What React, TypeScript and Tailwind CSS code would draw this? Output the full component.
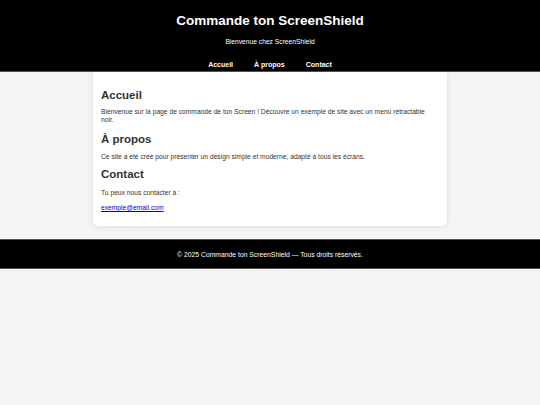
export default function App() {
  return (
    <div className="min-h-[405px] bg-[#f4f4f4] text-[#333] font-['Liberation_Sans',Arial,sans-serif]">
      <header className="bg-black text-white text-center pt-[12px] h-[72px] border-b border-[#555]">
        <h1 className="text-[13.5px] leading-[18px] font-bold">Commande ton ScreenShield</h1>
        <p className="text-[6.7px] leading-[9px] mt-[7px]">Bienvenue chez ScreenShield</p>
        <nav className="flex justify-center gap-[21px] mt-[14px] text-[7px] leading-[9px] font-bold">
          <a href="#accueil">Accueil</a>
          <a href="#apropos">À propos</a>
          <a href="#contact">Contact</a>
        </nav>
      </header>

      <main className="w-[354px] mx-auto bg-white rounded-b-[5px] shadow-[0_0_6px_rgba(0,0,0,0.1)] px-[8px] pt-[16px] pb-[14px]">
        <section id="accueil">
          <h2 className="text-[11.5px] leading-[14px] font-bold">Accueil</h2>
          <p className="text-[6.7px] leading-[8px] mt-[6px]">
            Bienvenue sur la page de commande de ton Screen ! Découvre un exemple de site avec un menu rétractable noir.
          </p>
        </section>
        <section id="apropos" className="mt-[8px]">
          <h2 className="text-[11.5px] leading-[14px] font-bold">À propos</h2>
          <p className="text-[6.7px] leading-[8px] mt-[7px]">
            Ce site a été créé pour présenter un design simple et moderne, adapté à tous les écrans.
          </p>
        </section>
        <section id="contact" className="mt-[6px]">
          <h2 className="text-[11.5px] leading-[14px] font-bold">Contact</h2>
          <p className="text-[6.7px] leading-[8px] mt-[8px]">Tu peux nous contacter à :</p>
          <p className="text-[6.7px] leading-[8px] mt-[7px]">
            <a href="mailto:exemple@email.com" className="text-[#0000ee] underline">exemple@email.com</a>
          </p>
        </section>
      </main>

      <footer className="bg-black text-white text-center text-[6.8px] leading-[9px] mt-[13px] h-[30px] flex items-center justify-center border-y border-[#555]">
        © 2025 Commande ton ScreenShield — Tous droits réservés.
      </footer>
    </div>
  )
}
